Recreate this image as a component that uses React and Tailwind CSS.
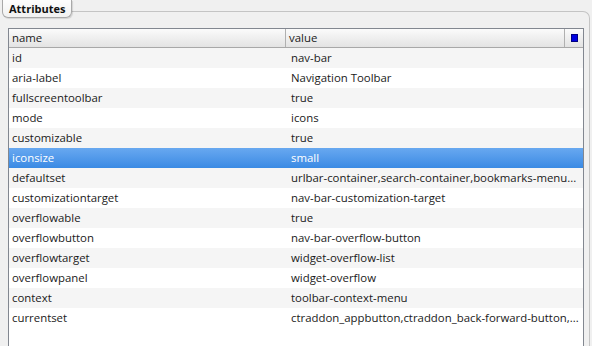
import React from "react";

const rows = [
  ["id", "nav-bar"],
  ["aria-label", "Navigation Toolbar"],
  ["fullscreentoolbar", "true"],
  ["mode", "icons"],
  ["customizable", "true"],
  ["iconsize", "small"],
  ["defaultset", "urlbar-container,search-container,bookmarks-menu..."],
  ["customizationtarget", "nav-bar-customization-target"],
  ["overflowable", "true"],
  ["overflowbutton", "nav-bar-overflow-button"],
  ["overflowtarget", "widget-overflow-list"],
  ["overflowpanel", "widget-overflow"],
  ["context", "toolbar-context-menu"],
  ["currentset", "ctraddon_appbutton,ctraddon_back-forward-button,..."],
];

export default function App() {
  return (
    <div
      className="relative w-[592px] h-[346px] overflow-hidden bg-[#f0f0f0] text-[11.4px] text-[#1a1a1a]"
      style={{ fontFamily: '"Open Sans", "Noto Sans", sans-serif' }}
    >
      <div className="mt-[11px] ml-[2px] mr-[2px] h-[400px] border-t border-r border-[#c4c4c4] rounded-tr-[7px] pl-[6px] pr-[5px] pt-[16px]">
        <div className="border border-[#828790] bg-white h-[380px]">
          <div className="flex h-[19px] border-b border-[#a8a8a8] bg-gradient-to-b from-[#fbfbfb] to-[#e3e3e3] leading-[18px]">
            <div className="w-[277px] pl-[3px] border-r border-[#b0b0b0]">name</div>
            <div className="w-[279px] pl-[3px] border-r border-[#b0b0b0]">value</div>
            <div className="flex-1 flex items-center justify-center">
              <div className="w-[7px] h-[8px] bg-[#0000e0] border border-[#000080]" />
            </div>
          </div>
          {rows.map(([n, v], i) => {
            const sel = n === "iconsize";
            const cls = sel
              ? "bg-gradient-to-b from-[#68a8f0] to-[#3a8ae4] text-white"
              : i % 2 === 0
              ? "bg-[#f5f5f5]"
              : "bg-white";
            return (
              <div key={n} className={"flex h-[20px] leading-[20px] whitespace-nowrap " + cls}>
                <div className="w-[278px] pl-[3px] overflow-hidden">{n}</div>
                <div className="flex-1 pl-[4px] overflow-hidden">{v}</div>
              </div>
            );
          })}
        </div>
      </div>
      <div className="absolute left-[2px] top-[0px] h-[18px] pt-[1px] px-[6px] bg-gradient-to-b from-[#fdfdfd] to-[#f1f1f1] border border-t-0 border-[#a9a9a9] rounded-b-[6px] shadow-[1px_1px_1px_rgba(0,0,0,0.12)] font-bold text-[11px] leading-[16px] text-[#111]">
        Attributes
      </div>
    </div>
  );
}
